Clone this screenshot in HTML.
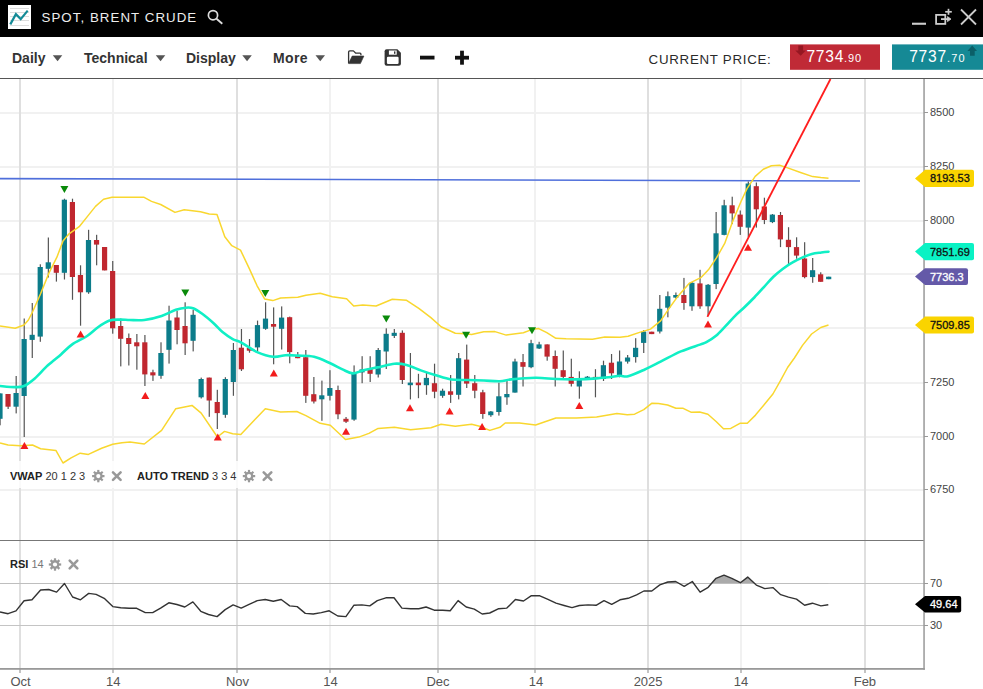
<!DOCTYPE html>
<html><head><meta charset="utf-8">
<style>
html,body{margin:0;padding:0;width:983px;height:689px;overflow:hidden;background:#fff;font-family:"Liberation Sans",sans-serif;}
#hdr{position:absolute;left:0;top:0;width:983px;height:37px;background:#000;}
#tb{position:absolute;left:0;top:37px;width:983px;height:41px;background:#fff;border-bottom:1px solid #555;}
.ax{font-family:"Liberation Sans",sans-serif;font-size:11px;fill:#444;}
.xl{font-family:"Liberation Sans",sans-serif;font-size:13px;fill:#555;}
.tg{font-family:"Liberation Sans",sans-serif;font-size:11px;}
.lg{font-family:"Liberation Sans",sans-serif;font-size:11px;fill:#222;}
.abs{position:absolute;white-space:nowrap;}
.menu{position:absolute;top:50px;font-size:14px;font-weight:bold;color:#333;line-height:16px;}
.arr{display:inline-block;width:0;height:0;border-left:5px solid transparent;border-right:5px solid transparent;border-top:6px solid #555;vertical-align:middle;margin-left:6px;position:relative;top:-1px;}
</style></head><body>
<div id="hdr"></div>
<div id="tb"></div>
<svg class="abs" style="left:0;top:0" width="983" height="689" viewBox="0 0 983 689">
<rect x="0" y="112" width="924" height="2" fill="#f1f1f1"/>
<rect x="0" y="166" width="924" height="2" fill="#f1f1f1"/>
<rect x="0" y="220" width="924" height="2" fill="#f1f1f1"/>
<rect x="0" y="273" width="924" height="2" fill="#f1f1f1"/>
<rect x="0" y="327" width="924" height="2" fill="#f1f1f1"/>
<rect x="0" y="382" width="924" height="2" fill="#f1f1f1"/>
<rect x="0" y="436" width="924" height="2" fill="#f1f1f1"/>
<rect x="0" y="489" width="924" height="2" fill="#f1f1f1"/>
<rect x="19" y="79" width="2" height="590" fill="#dfdfdf"/>
<rect x="19.5" y="669" width="1" height="4" fill="#888"/>
<rect x="112" y="79" width="2" height="590" fill="#f1f1f1"/>
<rect x="112.5" y="669" width="1" height="4" fill="#888"/>
<rect x="236" y="79" width="2" height="590" fill="#dfdfdf"/>
<rect x="236.5" y="669" width="1" height="4" fill="#888"/>
<rect x="329" y="79" width="2" height="590" fill="#f1f1f1"/>
<rect x="329.5" y="669" width="1" height="4" fill="#888"/>
<rect x="437" y="79" width="2" height="590" fill="#dfdfdf"/>
<rect x="437.5" y="669" width="1" height="4" fill="#888"/>
<rect x="534" y="79" width="2" height="590" fill="#f1f1f1"/>
<rect x="534.5" y="669" width="1" height="4" fill="#888"/>
<rect x="647" y="79" width="2" height="590" fill="#dfdfdf"/>
<rect x="647.5" y="669" width="1" height="4" fill="#888"/>
<rect x="740" y="79" width="2" height="590" fill="#f1f1f1"/>
<rect x="740.5" y="669" width="1" height="4" fill="#888"/>
<rect x="864" y="79" width="2" height="590" fill="#dfdfdf"/>
<rect x="864.5" y="669" width="1" height="4" fill="#888"/>
<rect x="0" y="461" width="290" height="27" fill="#fff" fill-opacity="0.85"/>
<line x1="0" y1="178.6" x2="860" y2="181" stroke="#4f6fdb" stroke-width="1.6"/>
<rect x="-0.51" y="393.4" width="1.2" height="31.9" fill="#555"/>
<rect x="-2.61" y="393.4" width="5.2" height="25.4" fill="#0c7c8a"/>
<rect x="7.54" y="394.0" width="1.2" height="15.0" fill="#555"/>
<rect x="5.44" y="394.0" width="5.2" height="12.7" fill="#c0272f"/>
<rect x="15.58" y="376.0" width="1.2" height="37.4" fill="#555"/>
<rect x="13.48" y="393.0" width="5.2" height="13.7" fill="#0c7c8a"/>
<rect x="23.63" y="318.5" width="1.2" height="118.5" fill="#555"/>
<rect x="21.53" y="339.0" width="5.2" height="57.0" fill="#0c7c8a"/>
<rect x="31.67" y="303.0" width="1.2" height="55.0" fill="#555"/>
<rect x="29.57" y="334.8" width="5.2" height="5.1" fill="#0c7c8a"/>
<rect x="39.72" y="264.3" width="1.2" height="77.5" fill="#555"/>
<rect x="37.62" y="267.0" width="5.2" height="69.6" fill="#0c7c8a"/>
<rect x="47.76" y="237.5" width="1.2" height="40.0" fill="#555"/>
<rect x="45.66" y="262.3" width="5.2" height="6.5" fill="#0c7c8a"/>
<rect x="55.81" y="265.0" width="1.2" height="16.6" fill="#555"/>
<rect x="53.71" y="265.0" width="5.2" height="7.8" fill="#c0272f"/>
<rect x="63.86" y="198.7" width="1.2" height="80.8" fill="#555"/>
<rect x="61.76" y="199.7" width="5.2" height="73.1" fill="#0c7c8a"/>
<rect x="71.90" y="198.7" width="1.2" height="101.1" fill="#555"/>
<rect x="69.80" y="202.0" width="5.2" height="75.0" fill="#c0272f"/>
<rect x="79.95" y="265.3" width="1.2" height="60.4" fill="#555"/>
<rect x="77.85" y="275.0" width="5.2" height="17.3" fill="#c0272f"/>
<rect x="87.99" y="229.8" width="1.2" height="64.0" fill="#555"/>
<rect x="85.89" y="240.0" width="5.2" height="52.3" fill="#0c7c8a"/>
<rect x="96.04" y="234.8" width="1.2" height="30.5" fill="#555"/>
<rect x="93.94" y="240.0" width="5.2" height="4.6" fill="#c0272f"/>
<rect x="104.08" y="247.0" width="1.2" height="23.4" fill="#555"/>
<rect x="101.98" y="247.0" width="5.2" height="23.4" fill="#c0272f"/>
<rect x="112.13" y="261.0" width="1.2" height="72.7" fill="#555"/>
<rect x="110.03" y="271.0" width="5.2" height="57.3" fill="#c0272f"/>
<rect x="120.17" y="318.5" width="1.2" height="47.9" fill="#555"/>
<rect x="118.07" y="326.0" width="5.2" height="12.8" fill="#c0272f"/>
<rect x="128.22" y="333.5" width="1.2" height="32.0" fill="#555"/>
<rect x="126.12" y="338.0" width="5.2" height="6.0" fill="#c0272f"/>
<rect x="136.26" y="334.0" width="1.2" height="35.7" fill="#555"/>
<rect x="134.16" y="342.3" width="5.2" height="4.0" fill="#c0272f"/>
<rect x="144.31" y="335.0" width="1.2" height="51.0" fill="#555"/>
<rect x="142.21" y="342.3" width="5.2" height="32.1" fill="#c0272f"/>
<rect x="152.36" y="369.7" width="1.2" height="11.2" fill="#555"/>
<rect x="150.26" y="372.3" width="5.2" height="3.1" fill="#c0272f"/>
<rect x="160.40" y="342.3" width="1.2" height="36.5" fill="#555"/>
<rect x="158.30" y="353.0" width="5.2" height="22.8" fill="#0c7c8a"/>
<rect x="168.45" y="305.7" width="1.2" height="57.9" fill="#555"/>
<rect x="166.35" y="320.5" width="5.2" height="29.3" fill="#0c7c8a"/>
<rect x="176.49" y="310.8" width="1.2" height="33.5" fill="#555"/>
<rect x="174.39" y="317.5" width="5.2" height="12.5" fill="#c0272f"/>
<rect x="184.54" y="302.3" width="1.2" height="52.7" fill="#555"/>
<rect x="182.44" y="326.0" width="5.2" height="17.3" fill="#c0272f"/>
<rect x="192.58" y="309.8" width="1.2" height="41.6" fill="#555"/>
<rect x="190.48" y="314.8" width="5.2" height="26.0" fill="#0c7c8a"/>
<rect x="200.63" y="377.6" width="1.2" height="20.9" fill="#555"/>
<rect x="198.53" y="379.0" width="5.2" height="18.3" fill="#0c7c8a"/>
<rect x="208.67" y="377.6" width="1.2" height="39.2" fill="#555"/>
<rect x="206.57" y="377.6" width="5.2" height="22.9" fill="#c0272f"/>
<rect x="216.72" y="389.8" width="1.2" height="39.2" fill="#555"/>
<rect x="214.62" y="402.0" width="5.2" height="11.1" fill="#c0272f"/>
<rect x="224.77" y="377.2" width="1.2" height="40.6" fill="#555"/>
<rect x="222.67" y="379.0" width="5.2" height="35.8" fill="#0c7c8a"/>
<rect x="232.81" y="343.0" width="1.2" height="52.8" fill="#555"/>
<rect x="230.71" y="350.0" width="5.2" height="32.0" fill="#0c7c8a"/>
<rect x="240.86" y="329.0" width="1.2" height="42.0" fill="#555"/>
<rect x="238.76" y="347.7" width="5.2" height="21.6" fill="#c0272f"/>
<rect x="248.90" y="339.0" width="1.2" height="13.7" fill="#555"/>
<rect x="246.80" y="348.0" width="5.2" height="2.7" fill="#c0272f"/>
<rect x="256.95" y="320.6" width="1.2" height="30.4" fill="#555"/>
<rect x="254.85" y="325.1" width="5.2" height="22.3" fill="#0c7c8a"/>
<rect x="264.99" y="302.3" width="1.2" height="27.5" fill="#555"/>
<rect x="262.89" y="318.6" width="5.2" height="10.2" fill="#0c7c8a"/>
<rect x="273.04" y="307.4" width="1.2" height="56.9" fill="#555"/>
<rect x="270.94" y="324.0" width="5.2" height="2.7" fill="#c0272f"/>
<rect x="281.08" y="306.4" width="1.2" height="43.1" fill="#555"/>
<rect x="278.98" y="317.6" width="5.2" height="11.2" fill="#0c7c8a"/>
<rect x="289.13" y="316.6" width="1.2" height="46.7" fill="#555"/>
<rect x="287.03" y="317.2" width="5.2" height="34.9" fill="#c0272f"/>
<rect x="297.17" y="352.0" width="1.2" height="6.2" fill="#555"/>
<rect x="295.07" y="356.2" width="5.2" height="2.0" fill="#c0272f"/>
<rect x="305.22" y="350.0" width="1.2" height="52.9" fill="#555"/>
<rect x="303.12" y="357.2" width="5.2" height="38.6" fill="#c0272f"/>
<rect x="313.27" y="377.0" width="1.2" height="26.5" fill="#555"/>
<rect x="311.17" y="394.2" width="5.2" height="7.3" fill="#c0272f"/>
<rect x="321.31" y="380.6" width="1.2" height="40.2" fill="#555"/>
<rect x="319.21" y="395.3" width="5.2" height="4.0" fill="#0c7c8a"/>
<rect x="329.36" y="370.2" width="1.2" height="30.3" fill="#555"/>
<rect x="327.26" y="388.0" width="5.2" height="7.8" fill="#0c7c8a"/>
<rect x="337.40" y="385.6" width="1.2" height="33.6" fill="#555"/>
<rect x="335.30" y="390.0" width="5.2" height="24.3" fill="#c0272f"/>
<rect x="345.45" y="417.0" width="1.2" height="6.0" fill="#555"/>
<rect x="343.35" y="418.8" width="5.2" height="2.9" fill="#c0272f"/>
<rect x="353.49" y="365.4" width="1.2" height="55.4" fill="#555"/>
<rect x="351.39" y="373.5" width="5.2" height="46.1" fill="#0c7c8a"/>
<rect x="361.54" y="356.2" width="1.2" height="27.0" fill="#555"/>
<rect x="359.44" y="369.4" width="5.2" height="3.0" fill="#0c7c8a"/>
<rect x="369.58" y="356.2" width="1.2" height="25.8" fill="#555"/>
<rect x="367.48" y="368.4" width="5.2" height="5.4" fill="#c0272f"/>
<rect x="377.63" y="348.0" width="1.2" height="29.5" fill="#555"/>
<rect x="375.53" y="350.0" width="5.2" height="24.5" fill="#0c7c8a"/>
<rect x="385.68" y="328.3" width="1.2" height="40.7" fill="#555"/>
<rect x="383.57" y="333.8" width="5.2" height="17.7" fill="#0c7c8a"/>
<rect x="393.72" y="329.0" width="1.2" height="9.0" fill="#555"/>
<rect x="391.62" y="332.8" width="5.2" height="3.1" fill="#0c7c8a"/>
<rect x="401.77" y="330.4" width="1.2" height="53.6" fill="#555"/>
<rect x="399.67" y="332.8" width="5.2" height="47.2" fill="#c0272f"/>
<rect x="409.81" y="353.0" width="1.2" height="46.4" fill="#555"/>
<rect x="407.71" y="382.6" width="5.2" height="2.6" fill="#0c7c8a"/>
<rect x="417.86" y="373.8" width="1.2" height="24.4" fill="#555"/>
<rect x="415.76" y="382.6" width="5.2" height="2.6" fill="#c0272f"/>
<rect x="425.90" y="372.4" width="1.2" height="22.4" fill="#555"/>
<rect x="423.80" y="377.9" width="5.2" height="7.3" fill="#0c7c8a"/>
<rect x="433.95" y="363.7" width="1.2" height="34.5" fill="#555"/>
<rect x="431.85" y="383.2" width="5.2" height="8.5" fill="#c0272f"/>
<rect x="441.99" y="388.7" width="1.2" height="9.1" fill="#555"/>
<rect x="439.89" y="390.7" width="5.2" height="5.1" fill="#0c7c8a"/>
<rect x="450.04" y="375.0" width="1.2" height="27.9" fill="#555"/>
<rect x="447.94" y="391.3" width="5.2" height="3.5" fill="#c0272f"/>
<rect x="458.08" y="353.0" width="1.2" height="46.4" fill="#555"/>
<rect x="455.98" y="358.2" width="5.2" height="36.6" fill="#0c7c8a"/>
<rect x="466.13" y="344.6" width="1.2" height="43.4" fill="#555"/>
<rect x="464.03" y="359.6" width="5.2" height="24.0" fill="#c0272f"/>
<rect x="474.18" y="375.0" width="1.2" height="23.2" fill="#555"/>
<rect x="472.08" y="383.2" width="5.2" height="7.5" fill="#c0272f"/>
<rect x="482.22" y="389.8" width="1.2" height="29.0" fill="#555"/>
<rect x="480.12" y="392.3" width="5.2" height="21.7" fill="#c0272f"/>
<rect x="490.27" y="411.0" width="1.2" height="5.8" fill="#555"/>
<rect x="488.17" y="411.5" width="5.2" height="3.7" fill="#0c7c8a"/>
<rect x="498.31" y="382.6" width="1.2" height="33.0" fill="#555"/>
<rect x="496.21" y="396.3" width="5.2" height="15.7" fill="#0c7c8a"/>
<rect x="506.36" y="380.4" width="1.2" height="24.4" fill="#555"/>
<rect x="504.26" y="394.0" width="5.2" height="3.3" fill="#0c7c8a"/>
<rect x="514.40" y="358.7" width="1.2" height="33.9" fill="#555"/>
<rect x="512.30" y="361.5" width="5.2" height="31.1" fill="#0c7c8a"/>
<rect x="522.45" y="354.0" width="1.2" height="32.5" fill="#555"/>
<rect x="520.35" y="362.1" width="5.2" height="4.7" fill="#c0272f"/>
<rect x="530.49" y="339.8" width="1.2" height="28.4" fill="#555"/>
<rect x="528.39" y="343.2" width="5.2" height="24.0" fill="#0c7c8a"/>
<rect x="538.54" y="341.8" width="1.2" height="7.2" fill="#555"/>
<rect x="536.44" y="344.4" width="5.2" height="4.1" fill="#0c7c8a"/>
<rect x="546.59" y="344.4" width="1.2" height="16.3" fill="#555"/>
<rect x="544.49" y="344.4" width="5.2" height="12.2" fill="#c0272f"/>
<rect x="554.63" y="350.5" width="1.2" height="36.0" fill="#555"/>
<rect x="552.53" y="356.0" width="5.2" height="12.8" fill="#c0272f"/>
<rect x="562.68" y="350.5" width="1.2" height="27.9" fill="#555"/>
<rect x="560.58" y="370.2" width="5.2" height="6.7" fill="#c0272f"/>
<rect x="570.72" y="358.7" width="1.2" height="27.8" fill="#555"/>
<rect x="568.62" y="376.9" width="5.2" height="6.9" fill="#c0272f"/>
<rect x="578.77" y="371.3" width="1.2" height="27.4" fill="#555"/>
<rect x="576.67" y="379.0" width="5.2" height="7.5" fill="#0c7c8a"/>
<rect x="586.81" y="376.0" width="1.2" height="2.5" fill="#555"/>
<rect x="584.71" y="376.7" width="5.2" height="2.0" fill="#0c7c8a"/>
<rect x="594.86" y="369.2" width="1.2" height="28.1" fill="#555"/>
<rect x="592.76" y="376.9" width="5.2" height="2.0" fill="#c0272f"/>
<rect x="602.90" y="360.7" width="1.2" height="20.3" fill="#555"/>
<rect x="600.80" y="365.2" width="5.2" height="13.8" fill="#0c7c8a"/>
<rect x="610.95" y="354.0" width="1.2" height="25.0" fill="#555"/>
<rect x="608.85" y="362.7" width="5.2" height="10.6" fill="#c0272f"/>
<rect x="618.99" y="350.5" width="1.2" height="26.8" fill="#555"/>
<rect x="616.89" y="361.5" width="5.2" height="13.5" fill="#0c7c8a"/>
<rect x="627.04" y="355.0" width="1.2" height="8.6" fill="#555"/>
<rect x="624.94" y="357.5" width="5.2" height="4.1" fill="#0c7c8a"/>
<rect x="635.09" y="338.2" width="1.2" height="24.4" fill="#555"/>
<rect x="632.99" y="347.8" width="5.2" height="9.3" fill="#0c7c8a"/>
<rect x="643.13" y="330.0" width="1.2" height="23.0" fill="#555"/>
<rect x="641.03" y="331.5" width="5.2" height="11.4" fill="#0c7c8a"/>
<rect x="651.18" y="331.7" width="1.2" height="2.4" fill="#555"/>
<rect x="649.08" y="331.7" width="5.2" height="2.4" fill="#c0272f"/>
<rect x="659.22" y="295.0" width="1.2" height="38.5" fill="#555"/>
<rect x="657.12" y="308.8" width="5.2" height="22.7" fill="#0c7c8a"/>
<rect x="667.27" y="291.5" width="1.2" height="25.8" fill="#555"/>
<rect x="665.17" y="296.2" width="5.2" height="11.5" fill="#0c7c8a"/>
<rect x="675.31" y="292.5" width="1.2" height="6.1" fill="#555"/>
<rect x="673.21" y="295.0" width="5.2" height="2.6" fill="#0c7c8a"/>
<rect x="683.36" y="277.9" width="1.2" height="31.9" fill="#555"/>
<rect x="681.26" y="295.0" width="5.2" height="8.0" fill="#c0272f"/>
<rect x="691.40" y="282.0" width="1.2" height="28.8" fill="#555"/>
<rect x="689.30" y="282.8" width="5.2" height="23.5" fill="#0c7c8a"/>
<rect x="699.45" y="269.8" width="1.2" height="39.0" fill="#555"/>
<rect x="697.35" y="283.4" width="5.2" height="22.9" fill="#c0272f"/>
<rect x="707.50" y="284.0" width="1.2" height="31.9" fill="#555"/>
<rect x="705.39" y="284.8" width="5.2" height="21.5" fill="#0c7c8a"/>
<rect x="715.54" y="212.0" width="1.2" height="77.1" fill="#555"/>
<rect x="713.44" y="233.3" width="5.2" height="50.7" fill="#0c7c8a"/>
<rect x="723.59" y="199.8" width="1.2" height="35.5" fill="#555"/>
<rect x="721.49" y="205.3" width="5.2" height="29.6" fill="#0c7c8a"/>
<rect x="731.63" y="196.7" width="1.2" height="27.4" fill="#555"/>
<rect x="729.53" y="205.3" width="5.2" height="8.1" fill="#c0272f"/>
<rect x="739.68" y="210.5" width="1.2" height="24.4" fill="#555"/>
<rect x="737.58" y="214.6" width="5.2" height="12.2" fill="#c0272f"/>
<rect x="747.72" y="181.5" width="1.2" height="55.5" fill="#555"/>
<rect x="745.62" y="183.5" width="5.2" height="44.1" fill="#0c7c8a"/>
<rect x="755.77" y="182.5" width="1.2" height="45.1" fill="#555"/>
<rect x="753.67" y="186.2" width="5.2" height="23.1" fill="#c0272f"/>
<rect x="763.81" y="197.7" width="1.2" height="26.4" fill="#555"/>
<rect x="761.71" y="206.5" width="5.2" height="13.5" fill="#c0272f"/>
<rect x="771.86" y="214.0" width="1.2" height="9.1" fill="#555"/>
<rect x="769.76" y="214.6" width="5.2" height="7.5" fill="#0c7c8a"/>
<rect x="779.90" y="212.0" width="1.2" height="35.1" fill="#555"/>
<rect x="777.80" y="215.0" width="5.2" height="24.4" fill="#c0272f"/>
<rect x="787.95" y="227.2" width="1.2" height="37.0" fill="#555"/>
<rect x="785.85" y="239.8" width="5.2" height="7.3" fill="#c0272f"/>
<rect x="796.00" y="237.3" width="1.2" height="21.4" fill="#555"/>
<rect x="793.90" y="247.1" width="5.2" height="8.5" fill="#c0272f"/>
<rect x="804.04" y="242.2" width="1.2" height="36.1" fill="#555"/>
<rect x="801.94" y="258.5" width="5.2" height="18.6" fill="#c0272f"/>
<rect x="812.09" y="258.0" width="1.2" height="24.8" fill="#555"/>
<rect x="809.99" y="270.2" width="5.2" height="6.9" fill="#0c7c8a"/>
<rect x="820.13" y="272.3" width="1.2" height="9.5" fill="#555"/>
<rect x="818.03" y="274.3" width="5.2" height="7.5" fill="#c0272f"/>
<rect x="828.18" y="276.7" width="1.2" height="2.5" fill="#555"/>
<rect x="826.08" y="276.7" width="5.2" height="2.5" fill="#0c7c8a"/>
<polyline points="0.0,326.0 15.2,328.3 24.0,325.0 28.4,320.0 32.5,312.0 40.6,293.8 48.8,273.4 56.9,257.2 63.0,241.0 69.1,233.8 79.2,226.7 87.3,216.6 95.5,206.4 103.6,199.3 112.0,197.2 143.7,197.2 151.5,201.4 160.7,204.5 175.0,212.4 184.2,209.8 200.5,211.8 209.2,214.0 217.0,214.4 224.8,236.7 231.8,245.7 240.5,250.1 249.2,268.4 257.1,285.8 264.6,298.9 272.8,300.6 280.6,298.0 297.8,297.3 305.9,295.2 320.2,293.2 332.3,296.7 346.6,298.7 353.7,306.0 362.8,305.0 376.1,306.0 392.3,299.3 406.6,300.3 418.8,308.4 430.9,317.6 441.1,326.7 455.3,333.2 465.5,333.8 471.6,334.4 483.8,331.8 495.0,331.6 506.2,335.1 523.4,332.7 531.6,329.6 538.7,328.6 546.8,332.7 555.9,338.3 566.1,338.8 592.5,339.2 604.7,337.1 620.0,337.2 628.1,336.2 640.3,332.1 650.5,329.1 660.6,320.9 668.8,308.8 676.9,297.6 689.1,283.4 701.3,277.3 708.4,269.8 716.6,257.7 724.7,243.4 732.8,221.1 740.9,201.8 747.0,188.6 755.2,176.4 763.3,169.3 771.4,165.8 779.5,165.2 787.7,167.9 800.5,172.5 812.7,176.6 820.8,177.6 828.5,178.2" fill="none" stroke="#f9d72f" stroke-width="1.5" stroke-linejoin="round"/>
<polyline points="0.0,443.0 8.1,445.0 20.3,445.7 32.5,445.0 40.6,448.8 55.9,450.4 63.0,463.0 71.1,457.9 80.2,453.2 88.4,454.4 101.6,448.3 112.7,444.3 121.9,442.7 130.0,442.0 144.3,444.0 161.6,430.4 175.8,408.7 192.0,405.4 201.2,413.1 217.4,437.0 224.5,431.4 232.7,433.8 240.8,434.5 255.2,419.2 265.3,408.7 280.5,412.1 296.8,411.5 305.9,415.6 320.2,423.3 330.3,425.3 345.5,439.5 358.8,437.1 368.9,433.4 378.1,428.4 394.4,427.3 410.6,429.8 430.9,427.8 441.1,424.3 455.3,426.3 471.6,424.3 479.7,426.3 489.8,430.4 500.0,427.3 505.2,423.0 519.4,423.0 535.6,425.0 555.9,418.0 576.3,418.0 596.6,417.0 616.9,413.5 627.3,414.7 634.6,414.2 643.8,409.6 652.0,403.2 658.5,403.5 667.6,405.0 675.9,408.3 683.2,408.3 691.4,412.3 699.7,412.0 707.9,414.2 716.1,421.5 723.5,428.8 730.8,428.4 739.9,423.3 747.3,423.3 755.5,415.1 764.7,404.1 772.9,394.0 780.2,381.2 787.6,367.5 794.4,358.0 802.5,345.4 811.6,334.0 820.8,327.5 828.5,325.0" fill="none" stroke="#f9d72f" stroke-width="1.5" stroke-linejoin="round"/>
<path d="M0.0,386.0 C2.5,386.2 11.2,387.1 15.2,387.1 C19.2,387.1 20.7,387.4 24.0,386.0 C27.3,384.6 30.8,381.8 34.8,378.4 C38.8,374.9 43.5,369.3 47.9,365.3 C52.3,361.3 57.0,357.8 61.0,354.4 C65.0,350.9 67.6,347.7 71.9,344.6 C76.2,341.5 82.8,338.9 87.1,336.0 C91.4,333.1 94.4,329.8 98.0,327.2 C101.6,324.6 105.3,322.0 108.9,320.7 C112.5,319.4 116.3,319.7 119.8,319.6 C123.3,319.5 125.9,319.9 130.0,320.0 C134.1,320.1 139.0,320.7 144.3,320.0 C149.6,319.3 156.3,317.6 161.6,315.9 C166.8,314.2 171.8,311.2 175.8,309.8 C179.9,308.4 183.0,307.9 185.9,307.7 C188.8,307.4 190.3,307.3 193.0,308.3 C195.7,309.3 198.6,311.2 202.2,313.8 C205.8,316.4 211.0,320.9 214.4,324.0 C217.8,327.1 219.4,329.6 222.5,332.1 C225.6,334.6 229.6,337.5 232.7,339.2 C235.8,340.9 236.7,340.1 240.8,342.3 C244.9,344.5 251.8,349.7 257.2,352.1 C262.6,354.5 268.7,356.3 273.4,356.8 C278.1,357.3 281.5,355.4 285.6,355.2 C289.7,355.0 293.1,355.3 297.8,355.6 C302.6,355.9 308.7,355.5 314.1,356.8 C319.5,358.1 325.6,361.2 330.3,363.3 C335.0,365.4 338.8,367.7 342.5,369.4 C346.2,371.1 349.3,373.2 352.7,373.4 C356.1,373.6 359.1,371.3 362.8,370.4 C366.5,369.5 372.1,368.4 375.0,367.8 C377.9,367.2 377.0,367.6 380.2,366.9 C383.4,366.2 390.0,364.0 394.4,363.7 C398.8,363.4 402.2,363.8 406.6,364.9 C411.0,366.0 416.1,368.7 420.8,370.4 C425.5,372.1 429.9,373.5 435.0,375.0 C440.1,376.5 445.9,378.7 451.3,379.5 C456.7,380.3 462.1,379.8 467.5,380.0 C472.9,380.2 478.4,380.3 483.8,380.5 C489.2,380.7 495.4,381.4 500.0,381.2 C504.6,381.0 505.4,380.0 511.3,379.4 C517.2,378.8 528.2,377.9 535.6,377.8 C543.0,377.7 549.1,378.7 555.9,379.0 C562.7,379.3 569.5,379.5 576.3,379.4 C583.1,379.3 591.2,378.8 596.6,378.4 C602.0,378.0 604.9,377.7 608.8,377.3 C612.7,376.9 616.8,376.0 620.0,375.8 C623.2,375.6 624.0,377.2 628.1,376.2 C632.2,375.2 639.0,372.1 644.4,369.7 C649.8,367.3 654.5,364.7 660.6,361.6 C666.7,358.6 674.3,354.2 680.9,351.4 C687.5,348.6 695.8,346.1 700.0,344.6 C704.2,343.1 703.7,343.7 706.4,342.2 C709.1,340.7 712.8,338.5 716.0,335.8 C719.2,333.1 722.3,329.5 725.5,326.2 C728.7,322.9 731.9,319.0 735.1,315.8 C738.3,312.6 741.5,310.1 744.7,307.0 C747.9,303.9 751.1,300.8 754.3,297.5 C757.5,294.2 760.7,290.6 763.9,287.1 C767.1,283.6 770.2,279.8 773.4,276.7 C776.6,273.6 779.8,271.1 783.0,268.7 C786.2,266.3 789.4,264.2 792.6,262.4 C795.8,260.5 799.0,259.0 802.2,257.6 C805.4,256.2 808.6,254.8 811.8,254.0 C815.0,253.2 818.5,252.9 821.3,252.5 C824.1,252.1 827.3,251.8 828.5,251.7" fill="none" stroke="#10efc5" stroke-width="2.6" stroke-linejoin="round" stroke-linecap="round"/>
<line x1="707.4" y1="316.8" x2="830.5" y2="79" stroke="#ff1e1e" stroke-width="1.8"/>
<polygon points="60.4,186.1 68.4,186.1 64.4,193.1" fill="#0a8a0a"/>
<polygon points="181.3,289.5 189.3,289.5 185.3,296.5" fill="#0a8a0a"/>
<polygon points="261.3,290.0 269.3,290.0 265.3,297.0" fill="#0a8a0a"/>
<polygon points="382.3,315.5 390.3,315.5 386.3,322.5" fill="#0a8a0a"/>
<polygon points="462.1,331.8 470.1,331.8 466.1,338.8" fill="#0a8a0a"/>
<polygon points="528.0,327.2 536.0,327.2 532.0,334.2" fill="#0a8a0a"/>
<polygon points="20.4,449.0 28.4,449.0 24.4,442.0" fill="#f21c1c"/>
<polygon points="76.6,337.5 84.6,337.5 80.6,330.5" fill="#f21c1c"/>
<polygon points="141.3,399.0 149.3,399.0 145.3,392.0" fill="#f21c1c"/>
<polygon points="213.8,440.4 221.8,440.4 217.8,433.4" fill="#f21c1c"/>
<polygon points="269.8,376.4 277.8,376.4 273.8,369.4" fill="#f21c1c"/>
<polygon points="342.0,434.7 350.0,434.7 346.0,427.7" fill="#f21c1c"/>
<polygon points="406.0,411.3 414.0,411.3 410.0,404.3" fill="#f21c1c"/>
<polygon points="445.6,414.6 453.6,414.6 449.6,407.6" fill="#f21c1c"/>
<polygon points="478.1,429.9 486.1,429.9 482.1,422.9" fill="#f21c1c"/>
<polygon points="575.3,409.1 583.3,409.1 579.3,402.1" fill="#f21c1c"/>
<polygon points="704.0,327.5 712.0,327.5 708.0,320.5" fill="#f21c1c"/>
<polygon points="744.0,250.8 752.0,250.8 748.0,243.8" fill="#f21c1c"/>
<rect x="0" y="540" width="924" height="1" fill="#777"/>
<rect x="0" y="583" width="924" height="1" fill="#c4c4c4"/>
<rect x="0" y="625" width="924" height="1" fill="#c4c4c4"/>
<clipPath id="c70"><rect x="0" y="560" width="924" height="23.5"/></clipPath>
<polygon points="0.0,612.0 8.1,613.7 16.0,610.9 24.1,600.8 32.0,599.8 40.6,590.0 48.7,589.5 56.6,592.1 64.5,583.5 72.6,597.0 80.5,599.8 88.7,593.4 96.1,594.4 104.7,598.7 112.8,606.6 120.7,607.7 129.2,608.3 136.7,608.3 145.3,612.6 152.7,612.6 160.6,608.1 168.8,602.8 176.9,604.5 184.8,607.0 192.9,601.9 200.8,611.3 208.5,614.5 217.1,616.6 225.2,609.6 233.1,604.9 241.2,608.1 249.1,604.4 257.3,600.6 265.2,599.5 273.3,601.2 281.2,599.5 289.7,605.9 297.2,606.6 305.3,613.4 313.2,614.0 321.3,612.6 329.2,610.8 337.8,616.0 345.9,616.6 353.8,605.3 361.9,604.9 369.8,605.9 377.3,600.6 385.9,597.8 394.0,597.8 401.9,608.1 410.7,608.7 418.8,608.7 426.1,607.0 434.2,610.2 442.7,610.2 450.2,610.8 458.1,600.6 466.2,607.0 474.3,609.1 482.2,614.0 489.7,613.0 498.7,608.7 506.8,608.1 515.4,599.5 523.5,601.0 531.4,595.7 539.3,595.7 547.4,599.1 556.0,603.2 564.1,605.5 572.0,607.6 579.4,605.5 588.0,604.9 596.1,605.3 604.0,600.6 611.7,604.4 620.0,599.8 628.1,598.3 636.6,594.9 643.9,591.0 651.8,591.0 659.8,584.9 667.9,582.0 675.7,581.5 684.2,586.4 692.3,581.5 700.1,592.2 708.2,587.3 716.0,578.3 724.0,575.1 731.8,578.3 740.4,582.7 747.7,577.1 756.3,585.1 764.8,588.6 772.9,587.6 780.7,594.7 788.5,597.1 796.5,599.1 804.6,605.2 812.4,603.2 820.9,605.9 828.3,604.7 828.3,583.5 0.0,583.5" fill="#aaa" clip-path="url(#c70)"/>
<polyline points="0.0,612.0 8.1,613.7 16.0,610.9 24.1,600.8 32.0,599.8 40.6,590.0 48.7,589.5 56.6,592.1 64.5,583.5 72.6,597.0 80.5,599.8 88.7,593.4 96.1,594.4 104.7,598.7 112.8,606.6 120.7,607.7 129.2,608.3 136.7,608.3 145.3,612.6 152.7,612.6 160.6,608.1 168.8,602.8 176.9,604.5 184.8,607.0 192.9,601.9 200.8,611.3 208.5,614.5 217.1,616.6 225.2,609.6 233.1,604.9 241.2,608.1 249.1,604.4 257.3,600.6 265.2,599.5 273.3,601.2 281.2,599.5 289.7,605.9 297.2,606.6 305.3,613.4 313.2,614.0 321.3,612.6 329.2,610.8 337.8,616.0 345.9,616.6 353.8,605.3 361.9,604.9 369.8,605.9 377.3,600.6 385.9,597.8 394.0,597.8 401.9,608.1 410.7,608.7 418.8,608.7 426.1,607.0 434.2,610.2 442.7,610.2 450.2,610.8 458.1,600.6 466.2,607.0 474.3,609.1 482.2,614.0 489.7,613.0 498.7,608.7 506.8,608.1 515.4,599.5 523.5,601.0 531.4,595.7 539.3,595.7 547.4,599.1 556.0,603.2 564.1,605.5 572.0,607.6 579.4,605.5 588.0,604.9 596.1,605.3 604.0,600.6 611.7,604.4 620.0,599.8 628.1,598.3 636.6,594.9 643.9,591.0 651.8,591.0 659.8,584.9 667.9,582.0 675.7,581.5 684.2,586.4 692.3,581.5 700.1,592.2 708.2,587.3 716.0,578.3 724.0,575.1 731.8,578.3 740.4,582.7 747.7,577.1 756.3,585.1 764.8,588.6 772.9,587.6 780.7,594.7 788.5,597.1 796.5,599.1 804.6,605.2 812.4,603.2 820.9,605.9 828.3,604.7" fill="none" stroke="#333" stroke-width="1.4" stroke-linejoin="round"/>
<rect x="923.3" y="79" width="1.5" height="590.8" fill="#999"/>
<rect x="0" y="668" width="924.8" height="1.8" fill="#999"/>
<rect x="924" y="112" width="4" height="1" fill="#999"/>
<text x="930" y="115.8" class="ax">8500</text>
<rect x="924" y="166" width="4" height="1" fill="#999"/>
<text x="930" y="169.8" class="ax">8250</text>
<rect x="924" y="220" width="4" height="1" fill="#999"/>
<text x="930" y="223.8" class="ax">8000</text>
<rect x="924" y="273" width="4" height="1" fill="#999"/>
<text x="930" y="276.8" class="ax">7750</text>
<rect x="924" y="327" width="4" height="1" fill="#999"/>
<text x="930" y="330.8" class="ax">7500</text>
<rect x="924" y="382" width="4" height="1" fill="#999"/>
<text x="930" y="385.8" class="ax">7250</text>
<rect x="924" y="436" width="4" height="1" fill="#999"/>
<text x="930" y="439.8" class="ax">7000</text>
<rect x="924" y="489" width="4" height="1" fill="#999"/>
<text x="930" y="492.8" class="ax">6750</text>
<rect x="924" y="583" width="4" height="1" fill="#999"/>
<text x="930" y="586.8" class="ax">70</text>
<rect x="924" y="625" width="4" height="1" fill="#999"/>
<text x="930" y="628.8" class="ax">30</text>
<text x="20.5" y="685.5" class="xl" text-anchor="middle">Oct</text>
<text x="113.2" y="685.5" class="xl" text-anchor="middle">14</text>
<text x="237.5" y="685.5" class="xl" text-anchor="middle">Nov</text>
<text x="330.5" y="685.5" class="xl" text-anchor="middle">14</text>
<text x="438.0" y="685.5" class="xl" text-anchor="middle">Dec</text>
<text x="535.9" y="685.5" class="xl" text-anchor="middle">14</text>
<text x="648.1" y="685.5" class="xl" text-anchor="middle">2025</text>
<text x="741.0" y="685.5" class="xl" text-anchor="middle">14</text>
<text x="864.9" y="685.5" class="xl" text-anchor="middle">Feb</text>
<path d="M915,178.4 L925,169.8 L972,169.8 Q974,169.8 974,171.8 L974,184.9 Q974,186.9 972,186.9 L925,186.9 Z" fill="#fad400"/><text x="930" y="182.4" class="tg" fill="#111" stroke="#111" stroke-width="0.3">8193.53</text>
<path d="M915,251.6 L925,243.1 L972,243.1 Q974,243.1 974,245.1 L974,258.2 Q974,260.2 972,260.2 L925,260.2 Z" fill="#0af2c4"/><text x="930" y="255.6" class="tg" fill="#111" stroke="#111" stroke-width="0.3">7851.69</text>
<path d="M915,276.5 L925,268.2 L966,268.2 Q968,268.2 968,270.2 L968,282.9 Q968,284.9 966,284.9 L925,284.9 Z" fill="#6459a8"/><text x="930" y="280.5" class="tg" fill="#fff" stroke="#fff" stroke-width="0.3">7736.3</text>
<path d="M915,325.1 L925,316.6 L972,316.6 Q974,316.6 974,318.6 L974,331.6 Q974,333.6 972,333.6 L925,333.6 Z" fill="#fad400"/><text x="930" y="329.1" class="tg" fill="#111" stroke="#111" stroke-width="0.3">7509.85</text>
<path d="M915,604.2 L925,595.9 L959.2,595.9 Q961.2,595.9 961.2,597.9 L961.2,610.6 Q961.2,612.6 959.2,612.6 L925,612.6 Z" fill="#000"/><text x="930" y="608.2" class="tg" fill="#fff" stroke="#fff" stroke-width="0.3">49.64</text>
</svg>
<!-- header content -->
<svg class="abs" style="left:0;top:0" width="983" height="37">
<rect x="8" y="5" width="23" height="24" fill="#fff"/>
<g fill="#ddd"><rect x="10" y="8" width="19" height="1"/><rect x="10" y="12" width="19" height="1"/><rect x="10" y="16" width="19" height="1"/><rect x="10" y="20" width="19" height="1"/><rect x="10" y="25" width="19" height="1"/></g>
<polyline points="10.3,24.4 15.9,14.2 20.7,19.1 27.7,10.6" fill="none" stroke="#148b97" stroke-width="2.2"/>
<text x="41.5" y="22.2" font-family="Liberation Sans" font-size="13.3" fill="#eee" letter-spacing="1.05">SPOT, BRENT CRUDE</text>
<circle cx="213" cy="15.2" r="4.6" fill="none" stroke="#ddd" stroke-width="1.7"/>
<line x1="216.5" y1="18.7" x2="222.3" y2="23.8" stroke="#ddd" stroke-width="1.8"/>
<rect x="912" y="22.7" width="14" height="2.1" fill="#ccc"/>
<rect x="936.1" y="14.9" width="9.2" height="9" fill="none" stroke="#ccc" stroke-width="1.8"/>
<line x1="941" y1="19.1" x2="948" y2="19.1" stroke="#ccc" stroke-width="1.8"/>
<path d="M947.5,16.6 L951,19.1 L947.5,21.6 Z" fill="#ccc" stroke="#ccc" stroke-width="0.8"/>
<line x1="948.5" y1="8.8" x2="948.5" y2="14.8" stroke="#ccc" stroke-width="1.7"/>
<line x1="945.2" y1="11.8" x2="951.8" y2="11.8" stroke="#ccc" stroke-width="1.7"/>
<line x1="961" y1="9.5" x2="976" y2="24.5" stroke="#ccc" stroke-width="1.8"/>
<line x1="976" y1="9.5" x2="961" y2="24.5" stroke="#ccc" stroke-width="1.8"/>
</svg>
<div class="menu" style="left:12px">Daily</div>
<div class="menu" style="left:84px">Technical</div>
<div class="menu" style="left:186px">Display</div>
<div class="menu" style="left:273px;letter-spacing:0.4px">More</div>
<svg class="abs" style="left:0;top:0" width="340" height="70">
<path d="M52.8,55.3 L62.3,55.3 L57.55,61.3 Z" fill="#555"/>
<path d="M155.8,55.3 L165.3,55.3 L160.55,61.3 Z" fill="#555"/>
<path d="M242.3,55.3 L251.8,55.3 L247.05,61.3 Z" fill="#555"/>
<path d="M315.5,55.3 L325,55.3 L320.25,61.3 Z" fill="#555"/>
</svg>
<svg class="abs" style="left:0;top:37px" width="983" height="41">
<!-- folder (coords relative to top 37) -->
<path d="M348.6,26.3 L348.6,15 Q348.6,13.9 349.7,13.9 L353.4,13.9 L355.8,16.2 L360,16.2 Q360.9,16.2 360.9,17.1 L360.9,18.3" fill="none" stroke="#333" stroke-width="1.3" stroke-linejoin="round"/>
<path d="M352.2,19 L363.9,19 L360.4,26.6 L348.6,26.6 Z" fill="#333" stroke="#333" stroke-width="0.6" stroke-linejoin="round"/>
<!-- save -->
<path d="M386.6,12.2 L397.4,12.2 L400.9,15.7 L400.9,26.8 Q400.9,28.8 398.9,28.8 L386.6,28.8 Q384.6,28.8 384.6,26.8 L384.6,14.2 Q384.6,12.2 386.6,12.2 Z" fill="#333"/>
<rect x="388.9" y="13.5" width="7.8" height="4.2" fill="#fff"/>
<rect x="394" y="14.4" width="1.4" height="2.4" fill="#333"/>
<rect x="386.9" y="19.7" width="11.7" height="7.2" rx="1.2" fill="#fff"/>
<rect x="420" y="18.7" width="14.5" height="3.8" fill="#111"/>
<rect x="455" y="18.8" width="14" height="3.8" fill="#111"/>
<rect x="460.1" y="13.7" width="3.8" height="14" fill="#111"/>
<text x="648.6" y="26.6" font-family="Liberation Sans" font-size="13.3" fill="#2a2a2a" letter-spacing="0.72">CURRENT PRICE:</text>
<rect x="790" y="7.4" width="90" height="25.4" fill="#c02a36"/>
<rect x="892" y="7.4" width="91" height="25.4" fill="#158995"/>
<path d="M798.3,8.4 L803.1,8.4 L803.1,13.5 L805.7,13.5 L800.7,18.7 L795.3,13.5 L798.3,13.5 Z" fill="#951722"/>
<path d="M970,18.7 L974.7,18.7 L974.7,14 L977,14 L972.2,8.6 L967.4,14 L970,14 Z" fill="#0b5f68"/>
<text x="806.4" y="25" font-family="Liberation Sans" font-size="15.6" fill="#fff" letter-spacing="0.75">7734<tspan font-size="11" letter-spacing="0.9">.90</tspan></text>
<text x="909.2" y="25" font-family="Liberation Sans" font-size="15.6" fill="#fff" letter-spacing="0.75">7737<tspan font-size="11" letter-spacing="1.2">.70</tspan></text>
</svg>
<!-- legends -->
<svg class="abs" style="left:0;top:0" width="400" height="689">
<text x="10" y="480" font-family="Liberation Sans" font-size="11" fill="#222"><tspan font-weight="bold">VWAP</tspan><tspan fill="#333"> 20 1 2 3</tspan></text>
<text x="137" y="480" font-family="Liberation Sans" font-size="11" fill="#222"><tspan font-weight="bold">AUTO TREND</tspan><tspan fill="#333"> 3 3 4</tspan></text>
<text x="10" y="568" font-family="Liberation Sans" font-size="11" fill="#222"><tspan font-weight="bold">RSI</tspan><tspan fill="#777"> 14</tspan></text>
<rect x="97.2" y="469.9" width="2.2" height="12.4" fill="#999" transform="rotate(0 98.3 476.1)"/><rect x="97.2" y="469.9" width="2.2" height="12.4" fill="#999" transform="rotate(45 98.3 476.1)"/><rect x="97.2" y="469.9" width="2.2" height="12.4" fill="#999" transform="rotate(90 98.3 476.1)"/><rect x="97.2" y="469.9" width="2.2" height="12.4" fill="#999" transform="rotate(135 98.3 476.1)"/><circle cx="98.3" cy="476.1" r="4.4" fill="#999"/><circle cx="98.3" cy="476.1" r="2.1" fill="#fff"/><line x1="113.0" y1="472.3" x2="120.6" y2="479.90000000000003" stroke="#999" stroke-width="2.6" stroke-linecap="round"/><line x1="120.6" y1="472.3" x2="113.0" y2="479.90000000000003" stroke="#999" stroke-width="2.6" stroke-linecap="round"/><rect x="247.9" y="469.9" width="2.2" height="12.4" fill="#999" transform="rotate(0 249 476.1)"/><rect x="247.9" y="469.9" width="2.2" height="12.4" fill="#999" transform="rotate(45 249 476.1)"/><rect x="247.9" y="469.9" width="2.2" height="12.4" fill="#999" transform="rotate(90 249 476.1)"/><rect x="247.9" y="469.9" width="2.2" height="12.4" fill="#999" transform="rotate(135 249 476.1)"/><circle cx="249" cy="476.1" r="4.4" fill="#999"/><circle cx="249" cy="476.1" r="2.1" fill="#fff"/><line x1="263.7" y1="472.3" x2="271.3" y2="479.90000000000003" stroke="#999" stroke-width="2.6" stroke-linecap="round"/><line x1="271.3" y1="472.3" x2="263.7" y2="479.90000000000003" stroke="#999" stroke-width="2.6" stroke-linecap="round"/><rect x="53.9" y="558.3" width="2.2" height="12.4" fill="#999" transform="rotate(0 55 564.5)"/><rect x="53.9" y="558.3" width="2.2" height="12.4" fill="#999" transform="rotate(45 55 564.5)"/><rect x="53.9" y="558.3" width="2.2" height="12.4" fill="#999" transform="rotate(90 55 564.5)"/><rect x="53.9" y="558.3" width="2.2" height="12.4" fill="#999" transform="rotate(135 55 564.5)"/><circle cx="55" cy="564.5" r="4.4" fill="#999"/><circle cx="55" cy="564.5" r="2.1" fill="#fff"/><line x1="69.7" y1="560.7" x2="77.3" y2="568.3" stroke="#999" stroke-width="2.6" stroke-linecap="round"/><line x1="77.3" y1="560.7" x2="69.7" y2="568.3" stroke="#999" stroke-width="2.6" stroke-linecap="round"/>
</svg>
</body></html>
